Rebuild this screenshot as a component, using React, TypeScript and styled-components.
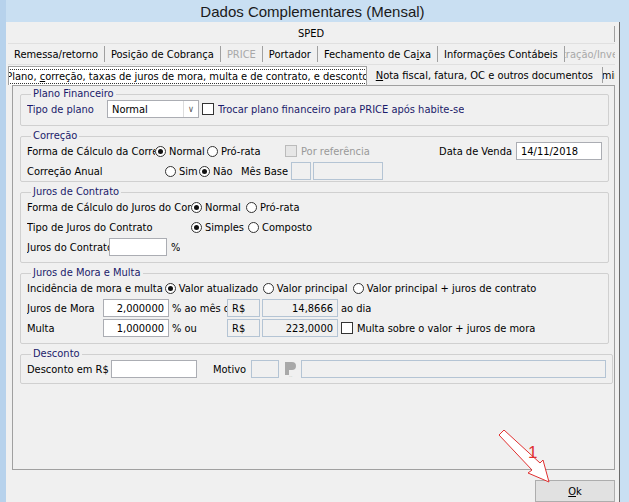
import React from "react";
import styled, { createGlobalStyle } from "styled-components";

const G = createGlobalStyle`
  html,body{margin:0;padding:0;background:#fff;}
  body{font-family:"Liberation Sans Narrow","DejaVu Sans Condensed","Liberation Sans",Arial,sans-serif;font-size:11px;color:#000;white-space:nowrap;}
`;
const Win = styled.div`
  width:629px;height:502px;box-sizing:border-box;display:flex;flex-direction:column;
  background:#c9dff2;border-left:6px solid #b7d2ec;position:relative;overflow:hidden;
`;
const Title = styled.div`
  height:22px;display:flex;align-items:center;justify-content:center;font-size:15px;
  font-family:"Liberation Sans",Arial,sans-serif;color:#1a1a1a;padding-right:10px;
`;
const Body = styled.div`
  flex:1;background:#f0f0f0;margin-right:9px;border-right:1px solid #6a6a6a;display:flex;flex-direction:column;padding:2px 4px 0 2px;
`;
const TabRow = styled.div<{ h: number }>`
  height:${p => p.h}px;display:flex;align-items:center;border-bottom:1px solid #e0e0e0;
`;
const Tab = styled.div<{ dis?: boolean; grow?: boolean; active?: boolean }>`
  ${p => (p.grow ? "flex:1;" : "")}
  padding:0 6px;height:16px;display:flex;align-items:center;justify-content:center;overflow:hidden;
  border-right:1px solid #a0a0a0;color:${p => (p.dis ? "#a8a8a8" : "#000")};
  ${p => p.active ? "background:#fff;border:1px solid #a0a0a0;border-bottom:none;height:18px;align-self:flex-end;" : ""}
`;
const Inner = styled.span`border:1px dotted #333;padding:0 2px;`;
const Panel = styled.div`
  border:1px solid #a0a0a0;height:380px;margin-left:4px;padding:3px 5px 0 7px;display:flex;flex-direction:column;gap:5px;
`;
const Group = styled.fieldset<{ h: number }>`
  margin:0;border:1px solid #d0d0d0;border-radius:2px;height:${p => p.h}px;box-sizing:border-box;
  padding:0 6px;display:flex;flex-direction:column;justify-content:space-around;
`;
const Legend = styled.legend`padding:0 2px;margin-left:4px;color:#1b1b6b;line-height:10px;`;
const Row = styled.div`display:flex;align-items:center;height:20px;`;
const Lbl = styled.span<{ w?: number; c?: string }>`${p => (p.w ? `width:${p.w}px;` : "")}flex-shrink:0;overflow:hidden;color:${p => p.c || "#000"};`;
const Input = styled.div<{ w: number; ro?: boolean; right?: boolean }>`
  width:${p => p.w}px;height:18px;box-sizing:border-box;border:1px solid ${p => (p.ro ? "#b4c4d4" : "#abadb3")};
  background:${p => (p.ro ? "#f0f0f0" : "#fff")};display:flex;align-items:center;padding:0 4px;flex-shrink:0;
  justify-content:${p => (p.right ? "flex-end" : "flex-start")};
`;
const Radio = styled.span<{ on?: boolean }>`
  width:11px;height:11px;border:1px solid #333;border-radius:50%;background:#fff;box-sizing:border-box;
  display:inline-flex;align-items:center;justify-content:center;margin-right:3px;flex-shrink:0;
  &::after{content:"";width:5px;height:5px;border-radius:50%;background:${p => (p.on ? "#111" : "transparent")};}
`;
const Check = styled.span<{ dis?: boolean }>`
  width:12px;height:12px;border:1px solid ${p => (p.dis ? "#bbb" : "#333")};background:${p => (p.dis ? "#e6e6e6" : "#fff")};
  box-sizing:border-box;margin-right:4px;flex-shrink:0;display:inline-block;
`;
const Opt = styled.span<{ w?: number; dis?: boolean }>`
  display:inline-flex;align-items:center;${p => (p.w ? `width:${p.w}px;` : "")}flex-shrink:0;color:${p => (p.dis ? "#999" : "#000")};
`;
const Sp = styled.span<{ w: number }>`width:${p => p.w}px;flex-shrink:0;`;
const Select = styled.div`
  width:92px;height:18px;border:1px solid #abadb3;background:#fff;box-sizing:border-box;display:flex;align-items:center;padding-left:4px;
  span{flex:1;}
  b{width:14px;height:16px;border-left:1px solid #ddd;display:flex;align-items:center;justify-content:center;font-weight:normal;color:#555;font-size:9px;}
`;
const Footer = styled.div`flex:1;display:flex;align-items:center;justify-content:flex-end;`;
const Ok = styled.div`
  width:78px;height:20px;border:1px solid #adadad;background:#e1e1e1;display:flex;align-items:center;justify-content:center;margin-top:10px;
`;
const Arrow = styled.svg`position:absolute;left:490px;top:430px;`;

export default function App() {
  return (
    <Win>
      <G />
      <Title>Dados Complementares (Mensal)</Title>
      <Body>
        <TabRow h={19}><Tab grow>SPED</Tab></TabRow>
        <TabRow h={20}>
          <Tab>Remessa/retorno</Tab><Tab>Posição de Cobrança</Tab><Tab dis>PRICE</Tab><Tab>Portador</Tab>
          <Tab>Fechamento de Ca<u>i</u>xa</Tab><Tab>Informações Contábeis</Tab><Tab dis grow style={{ borderRight: "none" }}>Administração/Investidores</Tab>
        </TabRow>
        <TabRow h={20} style={{ borderBottom: "none" }}>
          <Tab active><Inner>Plano, <u>c</u>orreção, taxas de juros de mora, multa e de contrato, e desconto</Inner></Tab>
          <Tab style={{ paddingLeft: 16, paddingRight: 16 }}><u>N</u>ota fiscal, fatura, OC e outros documentos</Tab>
          <Tab grow style={{ borderRight: "none" }}>Discriminação</Tab>
        </TabRow>
        <Panel>
          <Group h={37}>
            <Legend>Plano Financeiro</Legend>
            <Row><Lbl w={80} c="#1b1b6b">Tipo de plano</Lbl><Select><span>Normal</span><b>∨</b></Select><Sp w={3} /><Check /><Lbl c="#1b1b6b">Trocar plano financeiro para PRICE após habite-se</Lbl></Row>
          </Group>
          <Group h={51}>
            <Legend>Correção</Legend>
            <Row>
              <Lbl w={128}>Forma de Cálculo da Correção</Lbl>
              <Opt w={52}><Radio on />Normal</Opt><Opt w={78}><Radio />Pró-rata</Opt>
              <Opt dis><Check dis />Por referência</Opt><span style={{ flex: 1 }} />
              <Lbl>Data de Venda</Lbl><Sp w={4} /><Input w={86}>14/11/2018</Input>
            </Row>
            <Row>
              <Lbl w={138}>Correção Anual</Lbl>
              <Opt w={34}><Radio />Sim</Opt><Opt w={42}><Radio on />Não</Opt>
              <Lbl>Mês Base</Lbl><Sp w={3} /><Input w={20} ro /><Sp w={2} /><Input w={70} ro />
            </Row>
          </Group>
          <Group h={76}>
            <Legend>Juros de Contrato</Legend>
            <Row><Lbl w={164}>Forma de Cálculo do Juros do Contrato</Lbl><Opt w={55}><Radio on />Normal</Opt><Opt><Radio />Pró-rata</Opt></Row>
            <Row><Lbl w={164}>Tipo de Juros do Contrato</Lbl><Opt w={57}><Radio on />Simples</Opt><Opt><Radio />Composto</Opt></Row>
            <Row><Lbl w={82}>Juros do Contrato</Lbl><Input w={58} /><Sp w={4} /><Lbl>%</Lbl></Row>
          </Group>
          <Group h={76}>
            <Legend>Juros de Mora e Multa</Legend>
            <Row><Lbl>Incidência de mora e multa</Lbl><Sp w={2} /><Opt w={98}><Radio on />Valor atualizado</Opt><Opt w={90}><Radio />Valor principal</Opt><Opt><Radio />Valor principal + juros de contrato</Opt></Row>
            <Row><Lbl w={76}>Juros de Mora</Lbl><Input w={66} right>2,000000</Input><Sp w={3} /><Lbl w={55}>% ao mês ou</Lbl><Input w={33} ro>R$</Input><Sp w={2} /><Input w={76} ro right>14,8666</Input><Sp w={3} /><Lbl>ao dia</Lbl></Row>
            <Row><Lbl w={76}>Multa</Lbl><Input w={66} right>1,000000</Input><Sp w={3} /><Lbl w={55}>% ou</Lbl><Input w={33} ro>R$</Input><Sp w={2} /><Input w={76} ro right>223,0000</Input><Sp w={3} /><Check /><Lbl>Multa sobre o valor + juros de mora</Lbl></Row>
          </Group>
          <Group h={35}>
            <Legend>Desconto</Legend>
            <Row>
              <Lbl w={84}>Desconto em R$</Lbl><Input w={86} /><Sp w={16} /><Lbl w={38}>Motivo</Lbl>
              <Input w={28} ro /><Sp w={3} />
              <svg width="16" height="18" viewBox="0 0 16 18"><path d="M3 2h7a4 4 0 0 1 0 8H7v5H3z" fill="#a9a9a9" /><text x="7" y="17" fontSize="4" fill="#999">...</text></svg>
              <Sp w={3} /><div style={{ flex: 1, display: "flex" }}><Input w={305} ro /></div>
            </Row>
          </Group>
        </Panel>
        <Footer><Ok><span><u>O</u>k</span></Ok></Footer>
      </Body>
      <Arrow width="70" height="60" viewBox="0 0 70 60">
        <path d="M3 5 L8 0 L44 33 L47 30 L53 52 L32 43 L36 40 Z" fill="#fff" stroke="#e03030" strokeWidth="1" />
        <text x="32" y="28" fontSize="17" fill="#e03030" fontFamily="Liberation Sans">1</text>
      </Arrow>
    </Win>
  );
}
